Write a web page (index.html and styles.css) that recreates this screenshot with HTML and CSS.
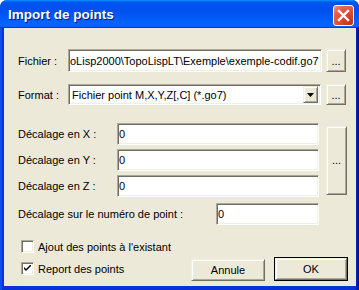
FILE: index.html
```html
<!DOCTYPE html>
<html lang="fr">
<head>
  <meta charset="UTF-8">
  <title>Import de points</title>
  <link rel="stylesheet" href="styles.css">
</head>
<body>
  <div class="window">
    <div class="titlebar">
      <span class="title">Import de points</span>
      <button class="close" aria-label="Fermer">
        <svg width="13" height="13" viewBox="0 0 13 13">
          <path d="M2 2 L11 11 M11 2 L2 11" stroke="#fff" stroke-width="2.4" stroke-linecap="square"/>
        </svg>
      </button>
    </div>

    <div class="client">
      <div class="row row-file">
        <label class="lbl lbl-short">Fichier :</label>
        <input class="field field-file" type="text" value="oLisp2000\TopoLispLT\Exemple\exemple-codif.go7">
        <button class="btn btn-dots">...</button>
      </div>

      <div class="row row-format">
        <label class="lbl lbl-short">Format :</label>
        <div class="field combo">
          <span class="combo-text">Fichier point M,X,Y,Z[,C] (*.go7)</span>
          <span class="combo-arrow">
            <svg width="7" height="4" viewBox="0 0 7 4"><path d="M0 0 H7 L3.5 4 Z" fill="#000"/></svg>
          </span>
        </div>
        <button class="btn btn-dots">...</button>
      </div>

      <div class="offsets">
        <label class="lbl">Décalage en X :</label>
        <input class="field" type="text" value="0">
        <label class="lbl">Décalage en Y :</label>
        <input class="field" type="text" value="0">
        <label class="lbl">Décalage en Z :</label>
        <input class="field" type="text" value="0">
        <button class="btn btn-tall">...</button>
      </div>

      <div class="row row-num">
        <label class="lbl lbl-num">Décalage sur le numéro de point :</label>
        <input class="field field-num" type="text" value="0">
      </div>

      <div class="bottom">
        <div class="checks">
          <div class="check-row">
            <span class="checkbox"></span>
            <span>Ajout des points à l'existant</span>
          </div>
          <div class="check-row">
            <span class="checkbox">
              <svg width="7" height="7" viewBox="0 0 7 7"><path d="M0 2 L0 4 L2 6 L7 1 L7 -1 L2 4 Z" fill="#000"/></svg>
            </span>
            <span>Report des points</span>
          </div>
        </div>
        <div class="actions">
          <button class="btn btn-action">Annule</button>
          <button class="btn btn-action btn-default">OK</button>
        </div>
      </div>
    </div>
  </div>
</body>
</html>
```

FILE: styles.css
```css
body {
  margin: 0;
  background: #ffffff;
  font-family: "Liberation Sans", Arial, sans-serif;
  font-size: 11px;
  color: #000;
}
.window {
  width: 359px;
  height: 290px;
  box-sizing: border-box;
  background: linear-gradient(90deg, #0831d9 0, #166aee 1px, #0831d9 2px, #0831d9 355px, #001ea0 357px, #00138c);
  border-radius: 7px 7px 0 0;
  display: flex;
  flex-direction: column;
  overflow: hidden;
}
.titlebar {
  height: 28px;
  flex: none;
  display: flex;
  align-items: center;
  justify-content: space-between;
  padding: 0 5px 0 8px;
  background: linear-gradient(180deg, #0997ff, #0053ee 8%, #0050ee 40%, #0066ff 88%, #0066ff 93%, #005bff 95%, #003dd7 96%, #003dd7);
}
.title {
  color: #fff;
  font-weight: bold;
  font-size: 13.5px;
  text-shadow: 1px 1px #0f1089;
  margin-top: 1px;
}
.close {
  width: 21px;
  height: 21px;
  padding: 0;
  margin-top: 2px;
  border: 1px solid #fff;
  border-radius: 3px;
  background: radial-gradient(circle at 85% 90%, #b73a1c 0, #d44a2a 40%, #e0664a 75%, #ee9a85);
  display: flex;
  align-items: center;
  justify-content: center;
}
.client {
  flex: 1;
  margin: 0 3px 4px 4px;
  background: #ece9d8;
  padding: 21px 0 0 14px;
}
.row {
  display: flex;
  align-items: center;
}
.lbl {
  white-space: nowrap;
}
.lbl-short {
  width: 50px;
}
.field {
  box-sizing: border-box;
  height: 22px;
  margin: 0;
  padding: 0 1px;
  background: #fff;
  border: 1px solid;
  border-color: #aca899 #fff #fff #aca899;
  box-shadow: inset 1px 1px #716f64, inset -1px -1px #f1efe2;
  font: inherit;
  font-size: 11px;
  outline: none;
}
.field-file {
  width: 254px;
  height: 23px;
}
.btn {
  box-sizing: border-box;
  margin: 0;
  padding: 0;
  background: #ece9d8;
  border: 1px solid;
  border-color: #f1efe2 #716f64 #716f64 #f1efe2;
  box-shadow: inset 1px 1px #fff, inset -1px -1px #aca899;
  font: inherit;
  font-size: 11px;
  color: #000;
}
.btn-dots {
  width: 20px;
  height: 23px;
  margin-left: 4px;
}
.row-format {
  margin-top: 12px;
}
.row-format .btn-dots {
  margin-left: 5px;
  height: 21px;
}
.combo {
  width: 253px;
  height: 21px;
  display: flex;
  align-items: center;
  justify-content: space-between;
  padding: 0 2px 0 3px;
}
.combo-arrow {
  box-sizing: border-box;
  width: 15px;
  height: 17px;
  display: flex;
  align-items: center;
  justify-content: center;
  background: #ece9d8;
  border: 1px solid;
  border-color: #f1efe2 #716f64 #716f64 #f1efe2;
  box-shadow: inset 1px 1px #fff, inset -1px -1px #aca899;
}
.offsets {
  margin-top: 18px;
  display: grid;
  grid-template-columns: 92px 202px 21px;
  grid-template-rows: 22px 22px 22px;
  row-gap: 4px;
  column-gap: 7px;
  align-items: center;
}
.offsets .field {
  grid-column: 2;
}
.offsets .lbl {
  grid-column: 1;
}
.btn-tall {
  grid-column: 3;
  grid-row: 1 / 4;
  height: 69px;
}
.row-num {
  margin-top: 6px;
}
.lbl-num {
  width: 198px;
}
.field-num {
  width: 103px;
}
.bottom {
  margin-top: 15px;
  display: flex;
  justify-content: space-between;
  align-items: flex-end;
  padding-right: 8px;
}
.checks {
  display: flex;
  flex-direction: column;
  gap: 9px;
  padding: 0 0 6px 3px;
}
.check-row {
  display: flex;
  align-items: center;
  gap: 4px;
  height: 13px;
}
.checkbox {
  box-sizing: border-box;
  width: 13px;
  height: 13px;
  background: #fff;
  border: 1px solid;
  border-color: #aca899 #fff #fff #aca899;
  box-shadow: inset 1px 1px #716f64, inset -1px -1px #f1efe2;
  display: flex;
  align-items: center;
  justify-content: center;
}
.actions {
  display: flex;
  align-items: flex-end;
  gap: 9px;
}
.btn-action {
  width: 74px;
  height: 22px;
  margin-bottom: 0;
}
.btn-default {
  height: 24px;
  outline: 1px solid #000;
  outline-offset: -1px;
  border-width: 2px;
}
```
